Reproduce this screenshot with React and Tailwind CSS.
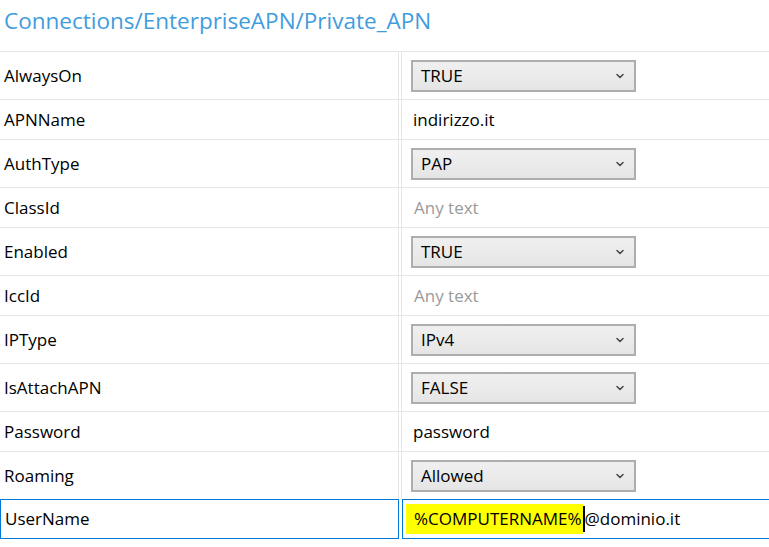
import { ChevronDown } from "lucide-react";

const rows = [
  { name: "AlwaysOn", kind: "select", value: "TRUE" },
  { name: "APNName", kind: "text", value: "indirizzo.it" },
  { name: "AuthType", kind: "select", value: "PAP" },
  { name: "ClassId", kind: "empty" },
  { name: "Enabled", kind: "select", value: "TRUE" },
  { name: "IccId", kind: "empty" },
  { name: "IPType", kind: "select", value: "IPv4" },
  { name: "IsAttachAPN", kind: "select", value: "FALSE" },
  { name: "Password", kind: "text", value: "password" },
  { name: "Roaming", kind: "select", value: "Allowed" },
];

function Select({ value }) {
  return (
    <div className="ml-[9px] flex h-[32px] w-[225px] items-center justify-between border-2 border-[#adadad] bg-gradient-to-b from-[#f0f0f0] to-[#e5e5e5] pl-[8px] pr-[8px]">
      <span className="text-black">{value}</span>
      <ChevronDown size={12} strokeWidth={3} className="text-[#444]" />
    </div>
  );
}

export default function App() {
  return (
    <div
      className="w-[769px] h-[547px] overflow-hidden bg-white text-[17px] text-black"
      style={{ fontFamily: '"Open Sans", "Noto Sans", sans-serif' }}
    >
      {/* Header */}
      <div className="h-[51px] pl-[4px] pt-[4px] text-[22.5px] text-[#3f9ddd]">
        Connections/EnterpriseAPN/Private_APN
      </div>

      {/* Property rows */}
      {rows.map((row) => (
        <div
          key={row.name}
          className={`flex border-t border-[#e6e6e6] ${
            row.kind === "select" ? "h-[48px]" : "h-[40px]"
          }`}
        >
          <div className="flex w-[399px] shrink-0 items-center border-r border-[#e6e6e6] pl-[4px]">
            {row.name}
          </div>
          <div className="ml-[2px] flex flex-1 items-center border-l border-[#e6e6e6]">
            {row.kind === "select" && <Select value={row.value} />}
            {row.kind === "text" && (
              <span className="pl-[11px]">{row.value}</span>
            )}
            {row.kind === "empty" && (
              <span className="pl-[12px] text-[#9a9a9a]">Any text</span>
            )}
          </div>
        </div>
      ))}

      {/* Selected row */}
      <div className="flex h-[40px]">
        <div className="flex w-[399px] shrink-0 items-center border border-[#0078d7] pl-[4px]">
          UserName
        </div>
        <div className="ml-[3px] flex flex-1 items-center border border-r-0 border-[#0078d7] pl-[3px]">
          <span className="flex h-[30px] items-center bg-[#ffff00] pl-[8px] pr-[1px]">
            %COMPUTERNAME%
          </span>
          <span className="h-[26px] w-[2px] bg-black" />
          <span>@dominio.it</span>
        </div>
      </div>
    </div>
  );
}
